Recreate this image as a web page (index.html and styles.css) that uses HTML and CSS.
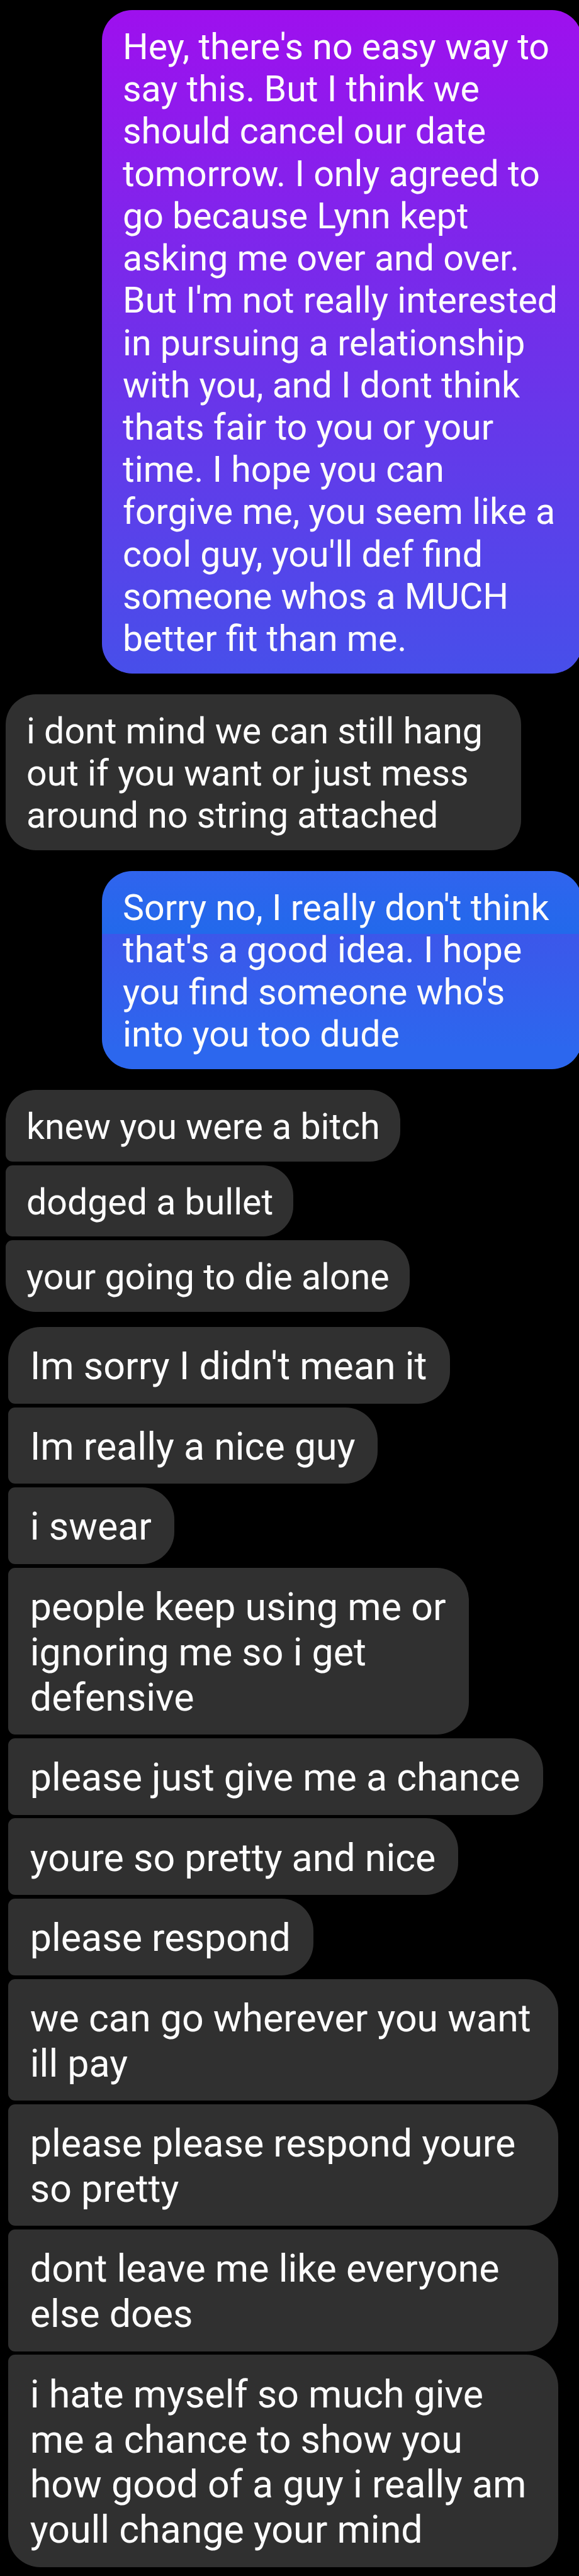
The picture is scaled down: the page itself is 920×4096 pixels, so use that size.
FILE: index.html
```html
<!DOCTYPE html>
<html lang="en">
<head>
<meta charset="utf-8">
<title>Messages</title>
<link rel="stylesheet" href="styles.css">
</head>
<body>
<main class="chat">
  <section class="group sent">
    <p class="bubble violet">Hey, there's no easy way to<br>say this. But I think we<br>should cancel our date<br>tomorrow. I only agreed to<br>go because Lynn kept<br>asking me over and over.<br>But I'm not really interested<br>in pursuing a relationship<br>with you, and I dont think<br>thats fair to you or your<br>time. I hope you can<br>forgive me, you seem like a<br>cool guy, you'll def find<br>someone whos a MUCH<br>better fit than me.</p>
  </section>
  <section class="group received">
    <p class="bubble hang">i dont mind we can still hang<br>out if you want or just mess<br>around no string attached</p>
  </section>
  <section class="group sent">
    <p class="bubble blue">Sorry no, I really don't think<br>that's a good idea. I hope<br>you find someone who's<br>into you too dude</p>
  </section>
  <section class="group received">
    <p class="bubble">knew you were a bitch</p>
    <p class="bubble">dodged a bullet</p>
    <p class="bubble">your going to die alone</p>
  </section>
  <section class="group received large">
    <p class="bubble">Im sorry I didn't mean it</p>
    <p class="bubble">Im really a nice guy</p>
    <p class="bubble">i swear</p>
    <p class="bubble">people keep using me or<br>ignoring me so i get<br>defensive</p>
    <p class="bubble">please just give me a chance</p>
    <p class="bubble">youre so pretty and nice</p>
    <p class="bubble">please respond</p>
    <p class="bubble wide">we can go wherever you want<br>ill pay</p>
    <p class="bubble wide">please please respond youre<br>so pretty</p>
    <p class="bubble wide">dont leave me like everyone<br>else does</p>
    <p class="bubble wide">i hate myself so much give<br>me a chance to show you<br>how good of a guy i really am<br>youll change your mind</p>
  </section>
</main>
</body>
</html>
```
FILE: styles.css
```css
* {
  box-sizing: border-box;
}

html,
body {
  margin: 0;
  background: #000;
  overflow: hidden;
}

.chat {
  width: 920px;
  height: 4096px;
  padding-top: 16px;
  display: flex;
  flex-direction: column;
  gap: 32.8px;
  overflow: hidden;
  font-family: Roboto, sans-serif;
  font-size: 57.25px;
  line-height: 67.22px;
  color: #fcfcfc;
}

.group {
  flex: none;
  display: flex;
  flex-direction: column;
  align-items: flex-start;
  gap: 5.8px;
  padding-left: 9.4px;
}

.bubble {
  flex: none;
  margin: 0;
  padding: 25px 32.2px 21.6px 32.6px;
  border-radius: 11px 48px 48px 11px;
  background: #303030;
  white-space: nowrap;
}

.bubble:first-child {
  border-top-left-radius: 48px;
}

.bubble:last-child {
  border-bottom-left-radius: 48px;
}

.hang {
  width: 818.4px;
}

.sent {
  padding-left: 162.4px;
}

/* Outgoing bubbles run slightly past the right edge of the screen. */
.sent .bubble {
  width: 763px;
}

.violet {
  background: linear-gradient(#9e10ee, #7030ea 50%, #474fea);
}

.blue {
  background: linear-gradient(#3064ee, #2269eb 31.6%, #3c57ea 31.7%, #2c67ee 90%);
}

.large {
  margin-top: -8.8px;
  gap: 5.75px;
  padding-left: 12.9px;
  font-size: 60.91px;
  line-height: 71.74px;
}

.large .bubble {
  padding: 27.3px 36px 22.8px 34.9px;
  border-radius: 11px 51px 51px 11px;
}

.large .bubble:first-child {
  border-top-left-radius: 51px;
}

.large .bubble:last-child {
  border-bottom-left-radius: 51px;
}

.large .wide {
  width: 873.8px;
}
```
